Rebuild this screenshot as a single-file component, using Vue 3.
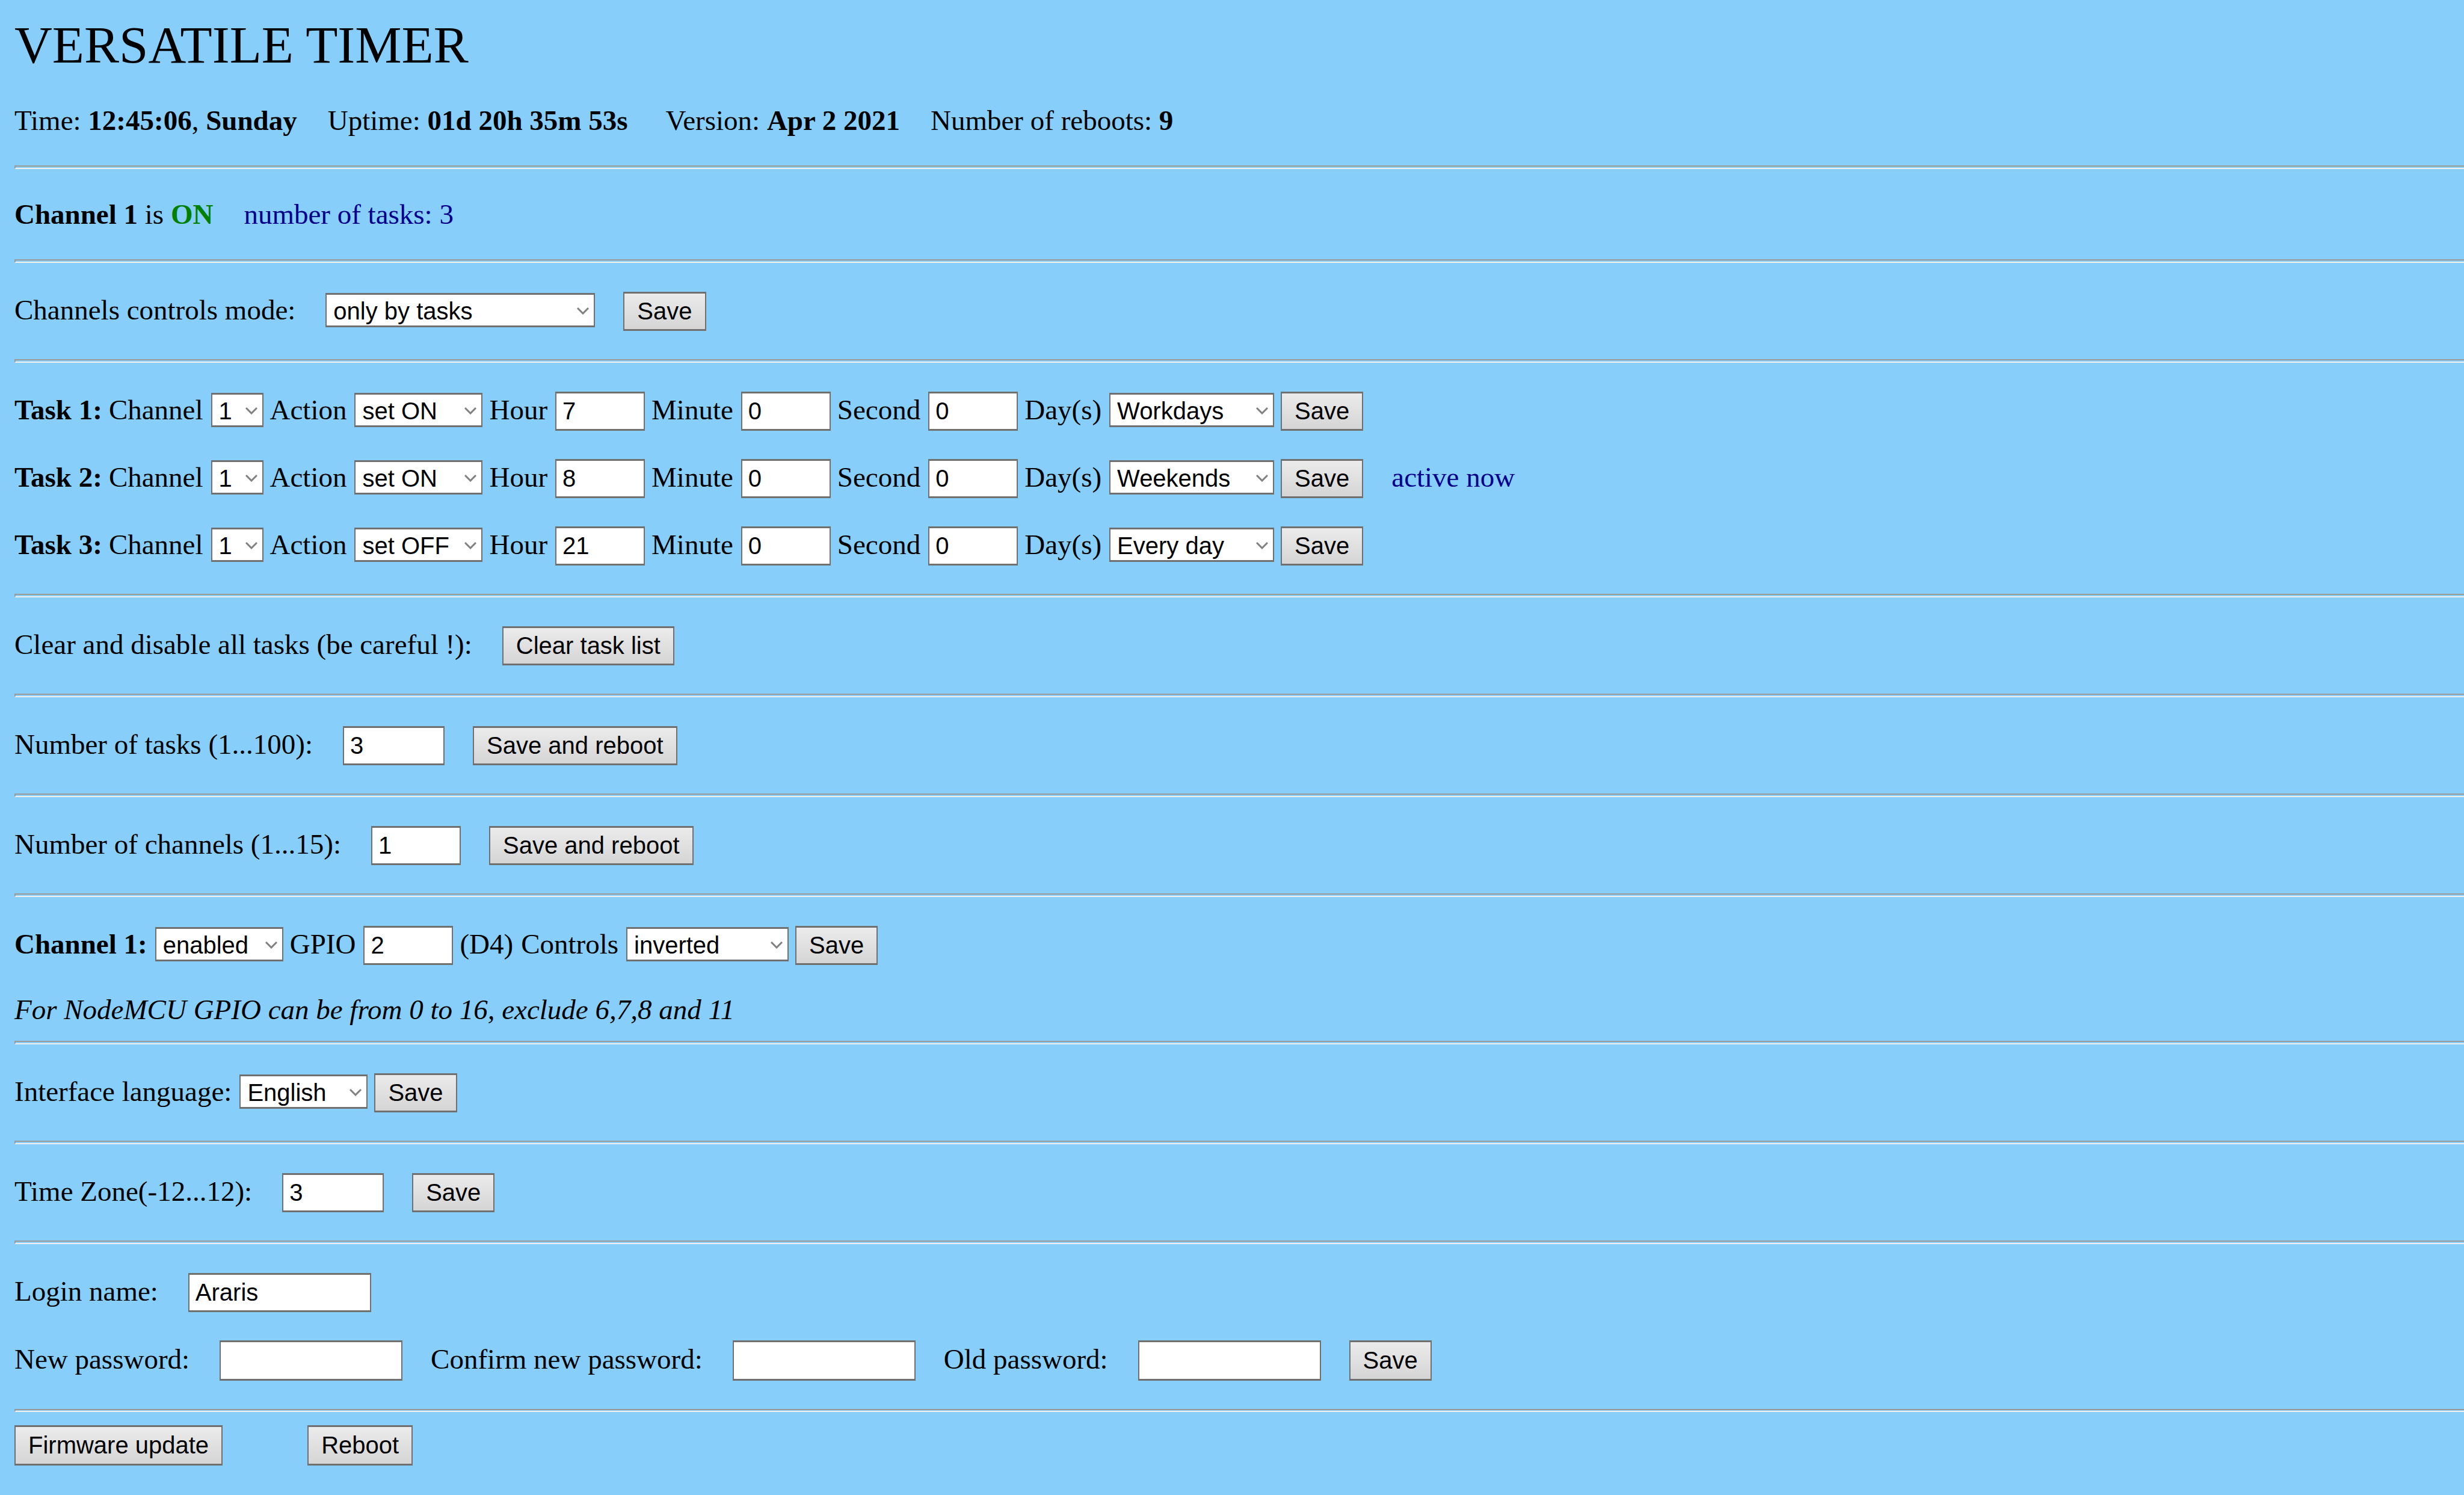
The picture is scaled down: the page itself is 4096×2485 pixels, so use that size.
<script setup>
import { reactive } from 'vue'

const tasks = reactive([
  { id: 1, channel: '1', action: 'set ON', hour: 7, minute: 0, second: 0, days: 'Workdays', active: false },
  { id: 2, channel: '1', action: 'set ON', hour: 8, minute: 0, second: 0, days: 'Weekends', active: true },
  { id: 3, channel: '1', action: 'set OFF', hour: 21, minute: 0, second: 0, days: 'Every day', active: false },
])

const settings = reactive({
  mode: 'only by tasks',
  taskCount: 3,
  channelCount: 1,
  enabled: 'enabled',
  gpio: 2,
  controls: 'inverted',
  language: 'English',
  timeZone: 3,
  login: 'Araris',
  newPassword: '',
  confirmPassword: '',
  oldPassword: '',
})

const actions = ['set ON', 'set OFF']
const dayChoices = ['Every day', 'Workdays', 'Weekends']
</script>

<template>
  <main class="page">
    <h1>VERSATILE TIMER</h1>
    <section class="block">
      <div class="row stats">
        <span>Time: <b>12:45:06</b>, <b>Sunday</b></span>
        <span>Uptime: <b>01d 20h 35m 53s</b></span>
        <span class="version">Version: <b>Apr 2 2021</b></span>
        <span>Number of reboots: <b>9</b></span>
      </div>
    </section>

    <hr />
    <section class="block">
      <div class="row stats">
        <span><b>Channel 1</b> is <b class="on">ON</b></span>
        <span class="note">number of tasks: 3</span>
      </div>
    </section>

    <hr />
    <form class="block" @submit.prevent>
      <div class="row wide">
        <label for="mode">Channels controls mode:</label>
        <span class="pick w-mode">
          <select id="mode" v-model="settings.mode">
            <option>only by tasks</option>
            <option>manual</option>
          </select>
          <svg viewBox="0 0 20 12" aria-hidden="true"><path d="M1 1 L10 10 L19 1" /></svg>
        </span>
        <button>Save</button>
      </div>
    </form>

    <hr />
    <section class="block">
      <form v-for="task in tasks" :key="task.id" class="row" @submit.prevent>
        <b>Task {{ task.id }}:</b>
        <label :for="`channel-${task.id}`">Channel</label>
        <span class="pick w-channel">
          <select :id="`channel-${task.id}`" v-model="task.channel">
            <option>1</option>
          </select>
          <svg viewBox="0 0 20 12" aria-hidden="true"><path d="M1 1 L10 10 L19 1" /></svg>
        </span>
        <label :for="`action-${task.id}`">Action</label>
        <span class="pick w-state">
          <select :id="`action-${task.id}`" v-model="task.action">
            <option v-for="action in actions" :key="action">{{ action }}</option>
          </select>
          <svg viewBox="0 0 20 12" aria-hidden="true"><path d="M1 1 L10 10 L19 1" /></svg>
        </span>
        <label :for="`hour-${task.id}`">Hour</label>
        <input :id="`hour-${task.id}`" v-model="task.hour" class="w-number" type="number" min="0" max="23" />
        <label :for="`minute-${task.id}`">Minute</label>
        <input :id="`minute-${task.id}`" v-model="task.minute" class="w-number" type="number" min="0" max="59" />
        <label :for="`second-${task.id}`">Second</label>
        <input :id="`second-${task.id}`" v-model="task.second" class="w-number" type="number" min="0" max="59" />
        <label :for="`days-${task.id}`">Day(s)</label>
        <span class="pick w-days">
          <select :id="`days-${task.id}`" v-model="task.days">
            <option v-for="choice in dayChoices" :key="choice">{{ choice }}</option>
          </select>
          <svg viewBox="0 0 20 12" aria-hidden="true"><path d="M1 1 L10 10 L19 1" /></svg>
        </span>
        <button>Save</button>
        <span v-if="task.active" class="note active">active now</span>
      </form>
    </section>

    <hr />
    <form class="block" @submit.prevent>
      <div class="row wide">
        <label for="clear">Clear and disable all tasks (be careful !):</label>
        <button id="clear">Clear task list</button>
      </div>
    </form>

    <hr />
    <form class="block" @submit.prevent>
      <div class="row wide">
        <label for="task-count">Number of tasks (1...100):</label>
        <input id="task-count" v-model="settings.taskCount" class="w-count" type="number" min="1" max="100" />
        <button>Save and reboot</button>
      </div>
    </form>

    <hr />
    <form class="block" @submit.prevent>
      <div class="row wide">
        <label for="channel-count">Number of channels (1...15):</label>
        <input id="channel-count" v-model="settings.channelCount" class="w-number" type="number" min="1" max="15" />
        <button>Save and reboot</button>
      </div>
    </form>

    <hr />
    <form class="block hinted" @submit.prevent>
      <div class="row">
        <label for="enabled"><b>Channel 1:</b></label>
        <span class="pick w-state">
          <select id="enabled" v-model="settings.enabled">
            <option>enabled</option>
            <option>disabled</option>
          </select>
          <svg viewBox="0 0 20 12" aria-hidden="true"><path d="M1 1 L10 10 L19 1" /></svg>
        </span>
        <label for="gpio">GPIO</label>
        <input id="gpio" v-model="settings.gpio" class="w-number" type="number" min="0" max="16" />
        <label for="gpio">(D4)</label>
        <label for="controls">Controls</label>
        <span class="pick w-controls">
          <select id="controls" v-model="settings.controls">
            <option>inverted</option>
            <option>not inverted</option>
          </select>
          <svg viewBox="0 0 20 12" aria-hidden="true"><path d="M1 1 L10 10 L19 1" /></svg>
        </span>
        <button>Save</button>
      </div>
      <div class="row"><i>For NodeMCU GPIO can be from 0 to 16, exclude 6,7,8 and 11</i></div>
    </form>

    <hr />
    <form class="block" @submit.prevent>
      <div class="row">
        <label for="language">Interface language:</label>
        <span class="pick w-state">
          <select id="language" v-model="settings.language">
            <option>English</option>
            <option>Russian</option>
          </select>
          <svg viewBox="0 0 20 12" aria-hidden="true"><path d="M1 1 L10 10 L19 1" /></svg>
        </span>
        <button>Save</button>
      </div>
    </form>

    <hr />
    <form class="block" @submit.prevent>
      <div class="row wide">
        <label for="zone">Time Zone(-12...12):</label>
        <input id="zone" v-model="settings.timeZone" class="w-count" type="number" min="-12" max="12" />
        <button>Save</button>
      </div>
    </form>

    <hr />
    <form class="block" @submit.prevent>
      <div class="row wide">
        <label for="login">Login name:</label>
        <input id="login" v-model="settings.login" class="w-text" type="text" />
      </div>
      <div class="row wide passwords">
        <label for="new-password">New password:</label>
        <input id="new-password" v-model="settings.newPassword" class="w-text" type="password" />
        <label for="confirm-password">Confirm new password:</label>
        <input id="confirm-password" v-model="settings.confirmPassword" class="w-text" type="password" />
        <label for="old-password">Old password:</label>
        <input id="old-password" v-model="settings.oldPassword" class="w-text" type="password" />
        <button>Save</button>
      </div>
    </form>

    <hr class="thin" />
    <div class="row footer">
      <button type="button">Firmware update</button>
      <button type="button">Reboot</button>
    </div>
  </main>
</template>

<style>
html {
  background: #87cefa;
}
</style>

<style scoped>
.page {
  padding: 24px 0 24px 24px;
  color: #000;
  font-family: "Liberation Serif", "Times New Roman", serif;
  font-size: 47px;
  line-height: 55px;
  white-space: nowrap;
}

h1 {
  margin: 0;
  font-size: 87px;
  line-height: 101px;
  font-weight: normal;
}

hr {
  height: 2px;
  margin: 0;
  border: 2px solid;
  border-color: #9a9a9a #eee #eee #9a9a9a;
  border-right: 0;
}

hr.thin {
  height: 1px;
}

.block {
  display: flex;
  flex-direction: column;
  gap: 47px;
  padding: 48px 0 47px;
}

.hinted {
  padding-bottom: 24px;
}

.row {
  display: flex;
  align-items: baseline;
  gap: 11px;
}

.row label {
  margin-right: 2px;
}

.wide {
  gap: 47px;
}

.wide label {
  margin-right: 3px;
}

.stats {
  gap: 51px;
}

.version {
  margin-left: 12px;
}

.on {
  color: #008000;
}

.note {
  color: #00008b;
}

.active {
  margin-left: 36px;
}

.footer {
  gap: 141px;
  padding-top: 22px;
}

button,
input,
select {
  box-sizing: border-box;
  margin: 0;
  border: 3px solid #707070;
  border-width: 3px 2px;
  border-radius: 0;
  color: #000;
  font-family: "Liberation Sans", Arial, sans-serif;
  font-size: 40px;
  line-height: 46px;
}

button {
  height: 65px;
  padding: 0 21px 1px;
  background: linear-gradient(#ebebeb, #d5d5d5);
}

input {
  height: 65px;
  padding: 0 10px;
  background: #fff;
  appearance: textfield;
}

input::-webkit-inner-spin-button,
input::-webkit-outer-spin-button {
  appearance: none;
  margin: 0;
}

.passwords input,
.passwords button,
.footer button {
  height: 67px;
}

.pick {
  position: relative;
  display: inline-flex;
}

.pick select {
  width: 100%;
  height: 57px;
  padding: 3px 30px 0 11px;
  background: #fff;
  appearance: none;
}

.pick svg {
  position: absolute;
  top: 24px;
  right: 10px;
  width: 20px;
  height: 12px;
  fill: none;
  stroke: #808080;
  stroke-width: 3;
  pointer-events: none;
}

.w-mode {
  width: 448px;
}

.w-channel {
  width: 87px;
}

.w-state {
  width: 213px;
}

.w-days {
  width: 274px;
}

.w-controls {
  width: 270px;
}

.w-number {
  width: 149px;
}

.w-count {
  width: 169px;
}

.w-text {
  width: 304px;
}
</style>
